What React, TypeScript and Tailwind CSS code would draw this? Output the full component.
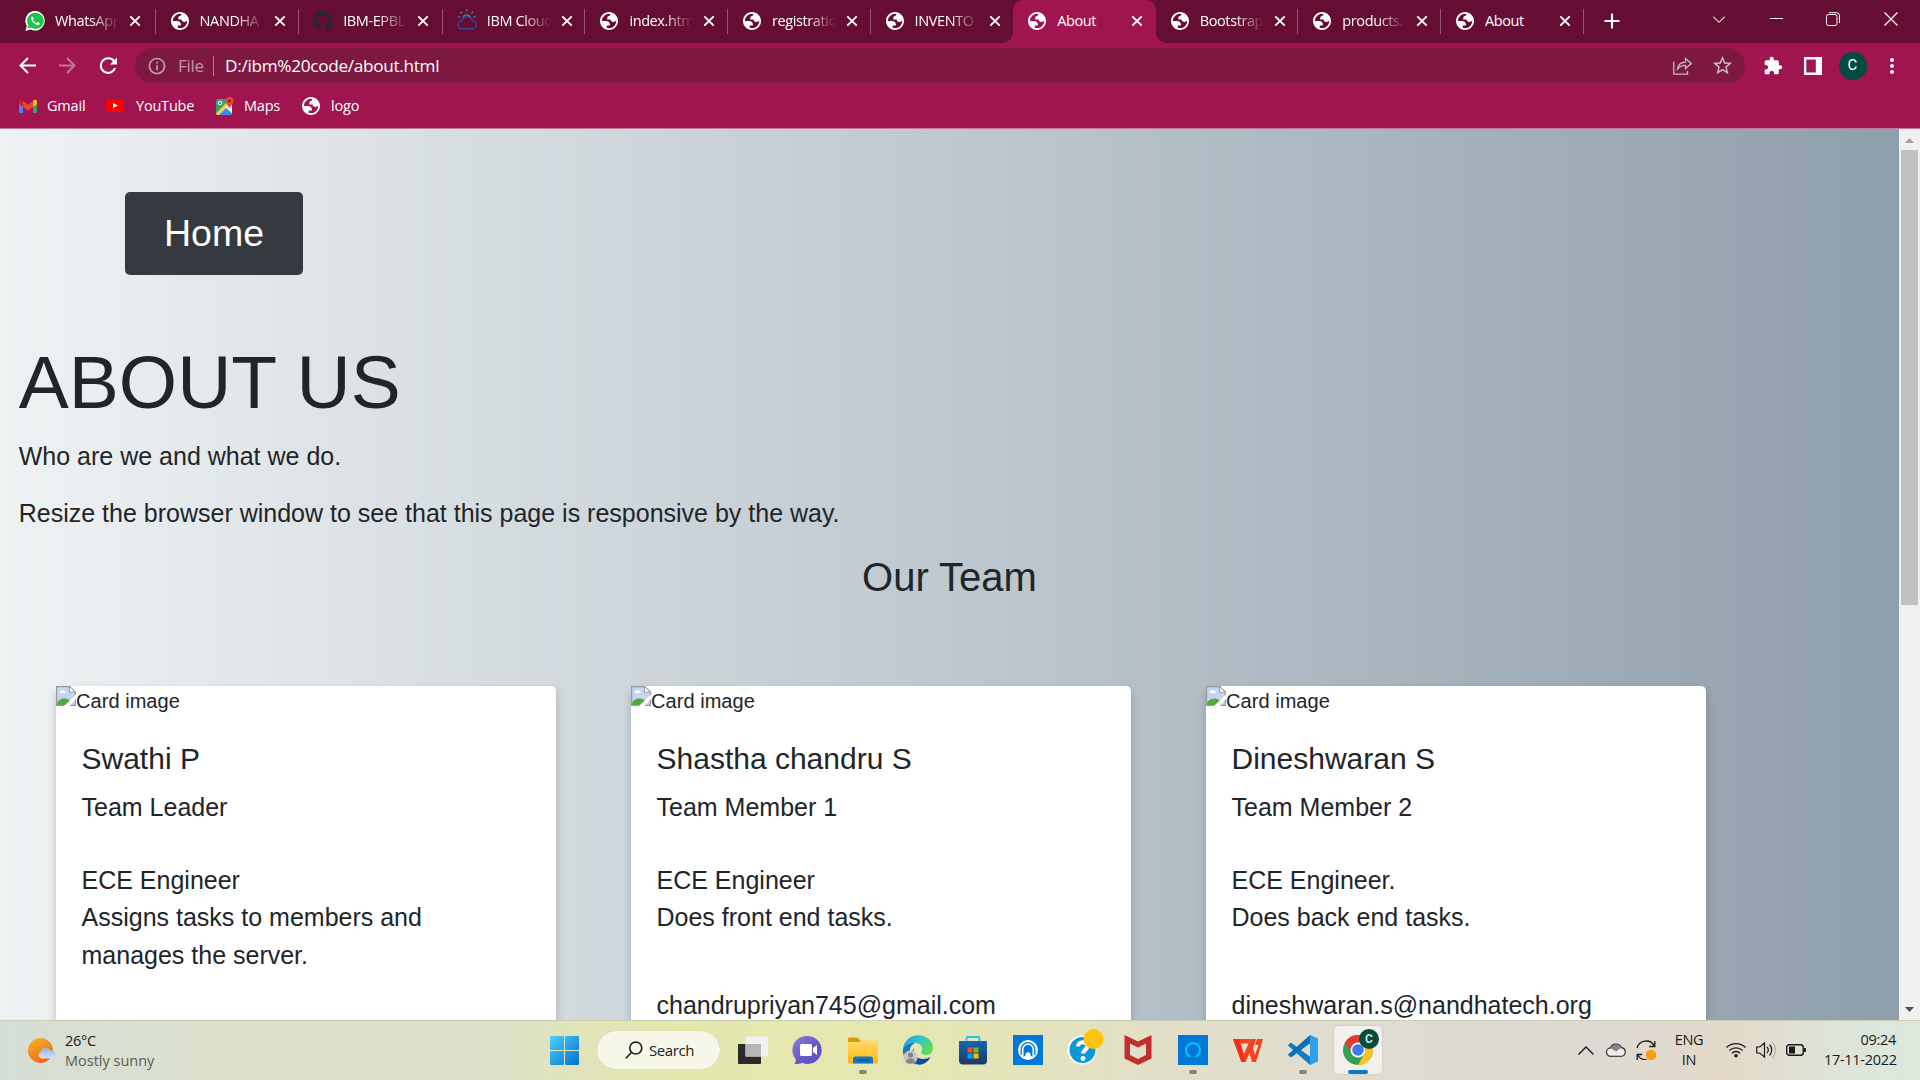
import React from "react";
import { VscChevronDown } from "react-icons/vsc";
import { MdExtension, MdOutlineInfo, MdStarOutline, MdMoreVert } from "react-icons/md";
import { FaGithub } from "react-icons/fa";

const ui = "font-['Open_Sans','Noto_Sans',sans-serif]";

function Globe() {
  return (
    <svg viewBox="2 2 20 20" className="size-[18px] shrink-0">
      <path
        fill="#fff"
        fillRule="evenodd"
        d="M12 2C6.480 2 2 6.480 2 12s4.480 10 10 10 10-4.480 10-10S17.520 2 12 2zM4 12h4.400c3.407.022 4.922 1.730 4.543 5.127H9.488v2.470a8.004 8.004 0 0 0 10.498-8.083C19.327 12.504 18.332 13 17 13c-2.137 0-3.206-.916-3.206-2.750h-3.748c-.274-2.728.683-4.092 2.870-4.092 0-.975.327-1.597.811-1.970A8.004 8.004 0 0 0 4 12z"
      />
    </svg>
  );
}

function WhatsApp() {
  return (
    <svg viewBox="0 0 20 20" className="size-5 shrink-0">
      <path d="M10.2 0A9.7 9.7 0 0 0 1.8 14.8L.3 20l5.3-1.4A9.8 9.8 0 1 0 10.2 0z" fill="#fff" />
      <path d="M10.2 1.7a8 8 0 0 0-6.8 12.2l-.9 3.4 3.5-.9A8.1 8.1 0 1 0 10.2 1.7z" fill="#1fc24a" />
      <path
        d="M7.2 5.3c-1 .5-1.5 1.7-1 3 1 2.700 3.200 4.900 5.700 5.700 1.400.4 2.700-.4 2.900-1.800l-2.200-1.200-1.100 1.200c-1.700-.7-2.900-1.900-3.500-3.400l.9-1.100z"
        fill="#fff"
      />
    </svg>
  );
}

function CloudSun() {
  return (
    <svg viewBox="0 0 20 22" className="-mt-1 h-[22px] w-5 shrink-0" fill="none" strokeWidth="1.5">
      <path d="M5 20.800h10a4 4 0 0 0 .5-8 5.500 5.500 0 0 0-10.500 0 4 4 0 0 0 0 8z" stroke="#31479b" />
      <path d="M6 9.500a4 4 0 0 1 7.500 0M9.700 1v2.500M3.500 3.500l1.500 2M16 3.500l-1.500 2M1 8.500l2.200.6M18.500 8.500l-2.200.6" stroke="#3d7d92" />
    </svg>
  );
}

function TabX() {
  return (
    <svg viewBox="0 0 12 12" className="size-3 shrink-0">
      <path d="M1.300 1.300l9.400 9.400M10.700 1.300l-9.400 9.400" stroke="#fff" strokeWidth="1.900" />
    </svg>
  );
}

type Tab = { title: string; icon: "wa" | "globe" | "gh" | "cloud"; active?: boolean; sep?: boolean };
const tabs: Tab[] = [
  { title: "WhatsApp", icon: "wa", sep: true },
  { title: "NANDHA", icon: "globe", sep: true },
  { title: "IBM-EPBL", icon: "gh", sep: true },
  { title: "IBM Cloud", icon: "cloud", sep: true },
  { title: "index.htm", icon: "globe", sep: true },
  { title: "registratio", icon: "globe", sep: true },
  { title: "INVENTO", icon: "globe" },
  { title: "About", icon: "globe", active: true },
  { title: "Bootstrap", icon: "globe", sep: true },
  { title: "products.", icon: "globe", sep: true },
  { title: "About", icon: "globe", sep: true },
];

function TabStrip() {
  return (
    <div className="flex h-[43px] bg-[#650d32] pl-3">
      {tabs.map((t, i) => (
        <div
          key={i}
          className={
            t.active
              ? "relative h-[43px] w-[142.600px] shrink-0 rounded-t-[10px] bg-[#a0144f]"
              : i < 3
                ? "relative h-[43px] w-[143.600px] shrink-0"
                : "relative h-[43px] w-[142.600px] shrink-0"
          }
        >
          {t.active && (
            <>
              <span className="absolute bottom-0 -left-2.5 size-2.5 bg-[radial-gradient(circle_at_0_0,#650d32_9.500px,#a0144f_10px)]" />
              <span className="absolute -right-2.5 bottom-0 size-2.5 bg-[radial-gradient(circle_at_100%_0,#650d32_9.500px,#a0144f_10px)]" />
            </>
          )}
          <div className={i === 0 ? "flex h-[42px] items-center pl-[13px]" : "flex h-[42px] items-center pl-3.5"}>
            <div className="flex w-5 justify-center">
              {t.icon === "wa" && <WhatsApp />}
              {t.icon === "globe" && <Globe />}
              {t.icon === "gh" && <FaGithub className="size-5 shrink-0 text-[#24292e]" />}
              {t.icon === "cloud" && <CloudSun />}
            </div>
            <span
              className={
                "ml-[10px] w-[64px] text-[14.500px] tracking-[-0.400px] whitespace-nowrap text-white " +
                (t.title === "About" ? "" : "[mask-image:linear-gradient(to_right,#000_55%,transparent)]")
              }
            >
              {t.title}
            </span>
            <span className="ml-[10px]">
              <TabX />
            </span>
          </div>
          {t.sep && <span className="absolute top-[9px] right-0 h-[25px] w-px bg-[#96587a]" />}
        </div>
      ))}
      <div className="flex h-[42px] items-center pl-[20px]">
        <svg viewBox="0 0 16 16" className="size-4">
          <path d="M8 .5v15M.5 8h15" stroke="#fff" strokeWidth="2.200" />
        </svg>
      </div>
      <div className="ml-auto flex h-[37px] items-center pr-[22px] text-white">
        <VscChevronDown className="mr-[41px] size-[20px] opacity-80" />
        <svg viewBox="0 0 13 13" className="mr-[43px] size-[13px]">
          <path d="M0 6.500h13" stroke="#fff" />
        </svg>
        <svg viewBox="0 0 14 14" className="mr-[44px] size-[14px]" fill="none" stroke="#fff">
          <rect x=".5" y="2.500" width="10.500" height="11" rx="2" />
          <path d="M3 .700h7.500a3 3 0 0 1 3 3v7.300" />
        </svg>
        <svg viewBox="0 0 14 14" className="size-[14px]">
          <path d="M.5.5l13 13M13.500.5l-13 13" stroke="#fff" strokeWidth="1.200" />
        </svg>
      </div>
    </div>
  );
}

function Toolbar() {
  return (
    <div className="flex h-[45px] items-center bg-[#a0144f] pl-[19px]">
      <svg viewBox="0 0 17 17" className="size-[17px]" fill="none" stroke="#fff" strokeWidth="2">
        <path d="M17 8.500H1.500M9 1L1.500 8.500 9 16" />
      </svg>
      <svg viewBox="0 0 17 17" className="ml-[23px] size-[17px]" fill="none" stroke="#c9749a" strokeWidth="2">
        <path d="M0 8.500h15.500M8 1l7.500 7.500L8 16" />
      </svg>
      <svg viewBox="0 0 18 18" className="ml-[23px] size-[18px]" fill="none">
        <path d="M15.500 5A7.300 7.300 0 1 0 16 11" stroke="#fff" strokeWidth="2" />
        <path d="M18 .5v7h-7z" fill="#fff" />
      </svg>
      <div className="ml-[18px] flex h-[35px] w-[1610px] items-center rounded-full bg-[#7d1940] pr-[11.500px] pl-3">
        <MdOutlineInfo className="size-5 text-[#c1a0ae]" />
        <span className={ui + " ml-[11px] w-[27px] text-[17px] tracking-[-0.300px] text-[#c194a6]"}>File</span>
        <span className="ml-[8px] h-5 w-px bg-[#b27f94]" />
        <span className={ui + " ml-[11px] text-[17.200px] tracking-[-0.300px] text-white"}>D:/ibm%20code/about.html</span>
        <svg viewBox="0 0 19 18" className="ml-auto h-[18px] w-[19px]" fill="none" stroke="#c6bcc1" strokeWidth="1.300">
          <path d="M.8 4.500v12.600h13.700v-3M4.500 12c.5-4.500 3.500-6.700 8-6.900V1.500l5.700 5-5.700 5V8.300c-3.500 0-6 1-8 3.700z" />
        </svg>
        <MdStarOutline className="ml-[19px] size-[23px] text-[#c6bcc1]" />
      </div>
      <MdExtension className="ml-[17.500px] size-5 text-white" />
      <svg viewBox="0 0 18 18" className="ml-[21px] size-[18px]">
        <path d="M0 0h18v18H0zM2.300 2.500v13h9.500v-13z" fill="#fff" fillRule="evenodd" />
      </svg>
      <span className="ml-[17px] flex size-7 items-center justify-center rounded-full bg-[#024b3e] font-[Roboto,sans-serif] text-[15px] text-white">C</span>
      <MdMoreVert className="ml-[13.500px] size-6 text-white" />
    </div>
  );
}

function Bookmarks() {
  const label = ui + " text-[14.500px] tracking-[-0.200px] text-white";
  return (
    <div className="flex h-[41px] items-center border-b border-[#c27a99] bg-[#a0144f] pb-[5px] pl-[19px]">
      <svg viewBox="0 0 18 14" className="mr-[10px] h-[14px] w-[18px]">
        <path d="M0 2v11a1 1 0 0 0 1 1h3V5z" fill="#4285f4" />
        <path d="M14 14h3a1 1 0 0 0 1-1V2l-4 3z" fill="#34a853" />
        <path d="M4 8V2l5 3.800L14 2v6l-5 3.800z" fill="#ea4335" />
        <path d="M0 2.500C0 .5 2 0 4 1.500V8L0 5z" fill="#c5221f" />
        <path d="M18 2.500C18 .5 16 0 14 1.500V8l4-3z" fill="#fbbc04" />
      </svg>
      <span className={label + " w-[38px]"}>Gmail</span>
      <svg viewBox="0 0 18 13" className="mr-3 ml-[21px] h-[13px] w-[18px]">
        <rect width="18" height="13" rx="3" fill="#f00" />
        <path d="M7 4l5 2.500L7 9z" fill="#fff" />
      </svg>
      <span className={label + " w-[58px]"}>YouTube</span>
      <svg viewBox="0 0 18 18" className="mr-[10px] ml-[22px] size-[18px]">
        <rect y="2" width="16" height="16" rx="1.500" fill="#34a06a" />
        <path d="M1 18L8.500 9.500 16 18z" fill="#4285f4" />
        <path d="M0 16.500L12 4l2.500 2.500L3 18H1z" fill="#fbd04a" />
        <path d="M9 10l7-5v11.500z" fill="#e8eaed" />
        <path d="M13.500 0a4 4 0 0 0-4 4c0 3 3.300 4 4 8 .7-4 4-5 4-8a4 4 0 0 0-4-4z" fill="#ea4335" />
        <circle cx="13.500" cy="4" r="1.500" fill="#961e17" />
        <circle cx="4" cy="6" r="1.800" fill="none" stroke="#fff" />
      </svg>
      <span className={label + " w-[37px]"}>Maps</span>
      <span className="mr-[11px] ml-[21px]">
        <Globe />
      </span>
      <span className={label}>logo</span>
    </div>
  );
}

function BrokenImage() {
  return (
    <svg viewBox="0 0 20 20" className="size-5">
      <path d="M.6.6h13l5.800 5.400v13.400H.6z" fill="#c3d5f3" stroke="#9a9a9a" strokeWidth="1.200" />
      <path d="M13.500.6v5.600h6z" fill="#fff" stroke="#9a9a9a" />
      <path d="M3.500 7c0-2 1-2 1.500-2 .6-1.500 3-1.500 3.500 0 1.500 0 1.800 2 .5 2z" fill="#fff" />
      <path d="M1.200 19v-2.500C4 12.500 8.500 11 14 14.500V19z" fill="#54a83c" />
      <path d="M8 20L20 8.500V13l-6.500 7z" fill="#fff" />
    </svg>
  );
}

type Member = { name: string; role: string; lines: string[]; email?: string };
const team: Member[] = [
  { name: "Swathi P", role: "Team Leader", lines: ["ECE Engineer", "Assigns tasks to members and", "manages the server."] },
  { name: "Shastha chandru S", role: "Team Member 1", lines: ["ECE Engineer", "Does front end tasks."], email: "chandrupriyan745@gmail.com" },
  { name: "Dineshwaran S", role: "Team Member 2", lines: ["ECE Engineer.", "Does back end tasks."], email: "dineshwaran.s@nandhatech.org" },
];

function Page() {
  return (
    <div className="flex h-[891px] overflow-hidden">
      <main className="h-[891px] w-[1899px] overflow-hidden bg-[linear-gradient(to_right,#eef2f3,#8e9eab)] font-['Liberation_Sans',Arial,sans-serif] text-[25px] leading-[37.500px] text-[#212529]">
        <div className="pt-[63px] pl-[125px]">
          <div className="flex h-[83px] w-[178px] items-center justify-center rounded-[5px] bg-[#343a40] text-[37.500px] text-white">Home</div>
        </div>
        <h1 className="mt-[62px] pl-[18.750px] text-[75px] leading-[90px]">ABOUT US</h1>
        <p className="mt-[11px] pl-[18.750px]">Who are we and what we do.</p>
        <p className="mt-[19px] pl-[18.750px]">Resize the browser window to see that this page is responsive by the way.</p>
        <h2 className="mt-[21px] text-center text-[40px] leading-[48px]">Our Team</h2>
        <div className="mt-[85px] flex gap-[75px] pl-[56px]">
          {team.map((m) => (
            <div key={m.name} className="h-[420px] w-[500px] shrink-0 rounded-[5px] bg-white shadow-[0_5px_10px_rgba(0,0,0,0.2)]">
              <div className="flex h-[30px]">
                <BrokenImage />
                <span className="text-[20px] leading-[30px] tracking-[0.050px]">Card image</span>
              </div>
              <div className="px-[25.500px] pt-[25px]">
                <h3 className="text-[30px] leading-9">{m.name}</h3>
                <p className="mt-3">{m.role}</p>
                <div className="mt-[35px]">
                  {m.lines.map((l) => (
                    <p key={l}>{l}</p>
                  ))}
                </div>
                {m.email && <p className="mt-[50px]">{m.email}</p>}
              </div>
            </div>
          ))}
        </div>
      </main>
      <div className="flex h-full w-[21px] flex-col items-center bg-[#f0f0f0]">
        <svg viewBox="0 0 9 5" className="mt-[9px] h-[5px] w-[9px]">
          <path d="M4.500 0L9 5H0z" fill="#a3a3a3" />
        </svg>
        <div className="mt-[7px] h-[455px] w-[17px] bg-[#c1c1c1]" />
        <svg viewBox="0 0 9 5" className="mt-auto mb-[8px] h-[5px] w-[9px]">
          <path d="M4.500 5L9 0H0z" fill="#505050" />
        </svg>
      </div>
    </div>
  );
}

const Box = ({ children }: { children: React.ReactNode }) => (
  <svg viewBox="0 0 30 30" className="size-[30px] overflow-visible">
    {children}
  </svg>
);

const apps: { id: string; dot?: boolean; art: React.ReactNode }[] = [
  {
    id: "taskview",
    art: (
      <>
        <rect x="0" y="9" width="23" height="20" rx="1" fill="#2c2a29" />
        <rect x="7.500" y="1.500" width="22.500" height="20" rx="1" fill="#f1f1f1" />
        <path d="M7.500 9H23v12.500H7.500z" fill="#b6b6b6" />
      </>
    ),
  },
  {
    id: "chat",
    art: (
      <>
        <path d="M15 1a14 14 0 1 1-6 26.800c-2.500 1.400-5 1.400-7.500 1.200 1-1.500 1.500-3 1.200-5A14 14 0 0 1 15 1z" fill="url(#chat)" />
        <rect x="7" y="9" width="12" height="12" rx="1.500" fill="#fff" />
        <path d="M20 13l4-3v10l-4-3z" fill="#fff" />
      </>
    ),
  },
  {
    id: "explorer",
    dot: true,
    art: (
      <>
        <path d="M0 8V4a1.500 1.500 0 0 1 1.500-1.500h8L13 6H30v2z" fill="#dd9a08" />
        <path d="M0 7h11.500l2-1.500H29a1 1 0 0 1 1 1V27.500a1 1 0 0 1-1 1H1a1 1 0 0 1-1-1z" fill="url(#folder)" />
        <path d="M5 28.500V24a2.500 2.500 0 0 1 2.500-2.500h15A2.500 2.500 0 0 1 25 24v4.500z" fill="#1078c8" />
        <path d="M9 25.200h12" stroke="#0a4a86" strokeWidth="1.200" />
      </>
    ),
  },
  {
    id: "edge",
    art: (
      <>
        <path d="M0 14C1 5.500 7.500.3 15.300.3 24.500.3 30 7 30 12.500c0 4.500-3 7.500-7 7.500-3 0-5-1-5-2.500 0-1 1.300-1.700 1.300-4 0-3-3-5.500-7-5.500C6.500 8 2 11 0 14z" fill="url(#edgeTop)" />
        <path d="M0 14C2.500 9.500 7 7.800 12 8c-5 2-6.500 8-4 13 2.500 4.800 8 7 13.500 6.500C13 32 2 28 .3 19A14 14 0 0 1 0 14z" fill="#1478c8" />
        <path d="M11 13c-2 5.500 2.500 11 9 11 3 0 5-.8 7.500-2-2 4.500-6 7.200-11 7.700C9 29 6 19 11 13z" fill="#0d4c9c" />
        <circle cx="7.500" cy="22.500" r="7" fill="#c6c6c6" />
        <circle cx="7.500" cy="20" r="2.600" fill="#858585" />
        <path d="M3 27c0-5 9-5 9 0-2 2.300-7 2.300-9 0z" fill="#858585" />
      </>
    ),
  },
  {
    id: "store",
    art: (
      <>
        <path d="M8.500 7V3.500A1.500 1.500 0 0 1 10 2h10a1.500 1.500 0 0 1 1.500 1.500V7" stroke="#25c0f5" strokeWidth="1.800" fill="none" />
        <path d="M1 6h28v19.500a4 4 0 0 1-4 4H5a4 4 0 0 1-4-4z" fill="url(#store)" />
        <path d="M9.500 12.500h5v5h-5z" fill="#f25022" />
        <path d="M15.500 12.500h5v5h-5z" fill="#7fba00" />
        <path d="M9.500 18.500h5v5h-5z" fill="#00a4ef" />
        <path d="M15.500 18.500h5v5h-5z" fill="#ffb900" />
      </>
    ),
  },
  {
    id: "arch",
    art: (
      <>
        <path d="M0 0h30v30H0z" fill="#0078d7" />
        <circle cx="15" cy="15" r="10" fill="#fff" />
        <path d="M8.200 20V14.500a6.800 6.800 0 0 1 13.600 0V20" fill="none" stroke="#0078d7" strokeWidth="1.300" />
        <path d="M10.500 22v-7.500a4.500 4.500 0 0 1 9 0V22l-2-1.500v-2L15 17l-2.500 1.500v2z" fill="#0078d7" />
      </>
    ),
  },
  {
    id: "help",
    art: (
      <>
        <circle cx="14" cy="15" r="14.500" fill="#fff" />
        <circle cx="14.500" cy="15" r="13" fill="#0c98d8" />
        <path d="M10 11.500C10 5.500 19.500 6 19.500 11c0 3.500-4.500 4-4.500 7.500" stroke="#fff" strokeWidth="4" fill="none" />
        <circle cx="15" cy="23.500" r="2.400" fill="#fff" />
        <circle cx="25.500" cy="4" r="10" fill="#ffc20e" />
      </>
    ),
  },
  {
    id: "shield",
    art: <path d="M1.500 0L15 6.500 28.500 0v23.500L15 30 1.500 23.500zM7 8.500v11.500l8 4 8-4V8.500l-8 4z" fill="#bf2f2d" fillRule="evenodd" />,
  },
  {
    id: "ring",
    dot: true,
    art: (
      <>
        <path d="M0 0h30v30H0z" fill="#0078d7" />
        <path d="M12.500 21.800a7 7 0 1 1 5 0" stroke="#00c8ff" strokeWidth="1.900" fill="none" />
      </>
    ),
  },
  {
    id: "wps",
    art: (
      <>
        <path d="M0 4h17l-1.500 4.500H7.500L11 19l6.500-15H23l-3 9 2 7 3.500-10h-3.500L24 4h6l-7 23h-4l-2.500-9-4 9H8.500z" fill="#f4411f" />
        <path d="M0 4h6l6.500 23h-4z" fill="#fa2b18" />
      </>
    ),
  },
  {
    id: "code",
    dot: true,
    art: (
      <>
        <path d="M.5 11a1 1 0 0 1 0-1.500L2 8.200a1.500 1.500 0 0 1 2 0L23 22.500v7L21.500 29.500z" fill="#0f7dc4" />
        <path d="M.5 19a1 1 0 0 0 0 1.500L2 21.800a1.500 1.500 0 0 0 2 0L23 7.500v-7L21.500.5z" fill="#0a6fb8" />
        <path d="M22 0l7 3a1.500 1.500 0 0 1 1 1.500v21a1.500 1.500 0 0 1-1 1.500l-7 3z" fill="#2aa0ee" />
      </>
    ),
  },
];

function Chrome() {
  return (
    <div className="relative flex size-[48px] items-center justify-center rounded-[5px] bg-[#f1f0ec] shadow-[0_0_1px_1px_rgba(0,0,0,0.05)]">
      <Box>
        <circle cx="15" cy="15" r="15" fill="#34a053" />
        <path d="M2 7.500A15 15 0 0 1 28 7.500H15a7.500 7.500 0 0 0-6.500 11.200z" fill="#e33b2e" />
        <path d="M28 7.500A15 15 0 0 1 15 30l6.500-11.200A7.500 7.500 0 0 0 15 7.500z" fill="#fcc31e" />
        <circle cx="15" cy="15" r="7.500" fill="#fff" />
        <circle cx="15" cy="15" r="5.800" fill="#3a7cec" />
      </Box>
      <span className="absolute top-[3px] right-[3px] flex size-5 items-center justify-center rounded-full bg-[#074d3f] font-[Roboto,sans-serif] text-[12px] font-bold text-[#cfe0da]">C</span>
      <span className="absolute bottom-0 left-[14px] h-1 w-5 rounded-full bg-[#0a78d4]" />
    </div>
  );
}

function Taskbar() {
  return (
    <div
      className={
        ui +
        " flex h-[60px] border-t border-[#c9cdb2] bg-[linear-gradient(to_right,#d6dfd6_0%,#dbe0cd_10%,#dce0c8_25%,#e4e8ac_35%,#e5e7b2_48%,#e2dfc8_60%,#dedbd5_75%,#dedad3_84%,#e4d9c9_90%,#dde5da_96%,#dce8dc_100%)] text-[14.500px] text-[#1a1a1a]"
      }
    >
      <svg className="absolute size-0">
        <defs>
          <linearGradient id="chat" x1="0" y1="0" x2="1" y2="1"><stop offset="0" stopColor="#8c86d8" /><stop offset=".5" stopColor="#6a58c8" /><stop offset="1" stopColor="#5c4fc0" /></linearGradient>
          <linearGradient id="folder" x1="0" y1="0" x2="0" y2="1"><stop offset="0" stopColor="#ffd968" /><stop offset="1" stopColor="#fdb813" /></linearGradient>
          <linearGradient id="edgeTop" x1="0" y1="0" x2="1" y2=".5"><stop offset="0" stopColor="#2196d8" /><stop offset=".5" stopColor="#2fc2d0" /><stop offset="1" stopColor="#5ddc5a" /></linearGradient>
          <linearGradient id="store" x1="0" y1="0" x2="0" y2="1"><stop offset="0" stopColor="#0f68b4" /><stop offset="1" stopColor="#213863" /></linearGradient>
          <linearGradient id="win" gradientUnits="userSpaceOnUse" x1="0" y1="0" x2="29" y2="29"><stop offset="0" stopColor="#4cd0fc" /><stop offset="1" stopColor="#0072d0" /></linearGradient>
          <linearGradient id="sun" x1="0" y1="0" x2=".5" y2="1"><stop offset="0" stopColor="#f3ba2d" /><stop offset="1" stopColor="#ee6a15" /></linearGradient>
          <linearGradient id="puff" x1="0" y1="0" x2="0" y2="1"><stop offset="0" stopColor="#8fb2f0" /><stop offset="1" stopColor="#d5e2fa" /></linearGradient>
        </defs>
      </svg>
      <div className="flex w-[550px] items-center pl-7">
        <svg viewBox="0 0 28 26" className="size-7">
          <circle cx="12.500" cy="12.500" r="12.500" fill="url(#sun)" />
          <path d="M13.500 20.500a3.500 3.500 0 0 1-.5-6.800 5 5 0 0 1 9.500-1 4 4 0 0 1 2 7.800z" fill="url(#puff)" />
        </svg>
        <div className="ml-[9px] leading-[20px]">
          <div className="tracking-[-0.300px]">26°C</div>
          <div className="text-[#5a5c52]">Mostly sunny</div>
        </div>
      </div>
      <div className="-mt-px flex items-center">
        <svg viewBox="0 0 29 29" className="size-[29px]" fill="url(#win)">
          <rect width="14" height="14" rx="1" />
          <rect x="15" width="14" height="14" rx="1" />
          <rect y="15" width="14" height="14" rx="1" />
          <rect x="15" y="15" width="14" height="14" rx="1" />
        </svg>
        <div className="ml-[18px] flex h-[38px] w-[123px] items-center rounded-full bg-[#f6f7e9] pl-[28px] shadow-[0_0_1px_rgba(0,0,0,0.2)]">
          <svg viewBox="0 0 18 18" className="size-[18px]" fill="none" stroke="#1a1a1a" strokeWidth="1.600">
            <circle cx="10.800" cy="7" r="6" />
            <path d="M6.500 11.500L.8 17.200" />
          </svg>
          <span className="ml-[6px] text-[15px] tracking-[-0.400px]">Search</span>
        </div>
        <div className="ml-[18px] flex gap-[25px]">
          {apps.map((a) => (
            <div key={a.id} className="relative">
              <Box>{a.art}</Box>
              {a.dot && <span className="absolute -bottom-[9px] left-[11px] h-1 w-2 rounded-full bg-[#85857a]" />}
            </div>
          ))}
        </div>
        <div className="ml-4">
          <Chrome />
        </div>
      </div>
      <div className="-mt-px ml-auto flex items-center pr-[24px]">
        <svg viewBox="0 0 16 9" className="h-[9px] w-4" fill="none" stroke="#1a1a1a" strokeWidth="1.400">
          <path d="M.5 8.500L8 1l7.500 7.500" />
        </svg>
        <svg viewBox="0 0 20 14" className="ml-[12px] h-[14px] w-5" stroke="#222" strokeWidth="1.100">
          <path d="M5 13.300a4.200 4.200 0 0 1-.5-8.400 6 6 0 0 1 11-.3 4.400 4.400 0 0 1 0 8.700z" fill="#ededed" />
          <path d="M4.500 4.900a6 6 0 0 1 11-.3L10 8.500z" fill="#858585" stroke="none" />
        </svg>
        <svg viewBox="0 0 20 20" className="ml-[10px] size-5" fill="none" stroke="#1a1a1a" strokeWidth="1.300">
          <path d="M1 8A9.300 9.300 0 0 1 18.500 6.500M18.800 1v5.500h-5.500M1.200 20v-5.500h5M1.500 15a9.300 9.300 0 0 0 9 4.500" />
          <circle cx="15" cy="15" r="5.200" fill="#ff9a0a" stroke="none" />
        </svg>
        <div className="ml-[18px] w-[30px] text-center leading-[20px] tracking-[-0.300px]">
          <div>ENG</div>
          <div>IN</div>
        </div>
        <svg viewBox="0 0 20 16" className="ml-[22px] h-4 w-5" fill="none" stroke="#1a1a1a" strokeWidth="1.300">
          <path d="M.5 5.500a13.500 13.500 0 0 1 19 0M3.500 8.500a9.300 9.300 0 0 1 13 0M6 11.200a5.600 5.600 0 0 1 8 0" />
          <circle cx="10" cy="13.800" r="1.800" fill="#1a1a1a" stroke="none" />
        </svg>
        <svg viewBox="0 0 20 18" className="ml-[10px] h-[18px] w-5" fill="none" stroke="#1a1a1a" strokeWidth="1.200">
          <path d="M.7 6v6h3L8.500 16V2L3.700 6zM11 6a4.500 4.500 0 0 1 0 6M13.500 3.500a8 8 0 0 1 0 11" />
          <path d="M16 1a11 11 0 0 1 0 16" stroke="#b5b0a8" />
        </svg>
        <svg viewBox="0 0 20 12" className="ml-[10px] h-3 w-5">
          <rect x=".7" y=".7" width="16.500" height="10.600" rx="2.500" fill="none" stroke="#1a1a1a" strokeWidth="1.400" />
          <rect x="3" y="2.500" width="6" height="7" fill="#1a1a1a" />
          <path d="M18 4h1.200a.8.8 0 0 1 .8.8v2.400a.8.8 0 0 1-.8.800H18z" fill="#1a1a1a" />
        </svg>
        <div className="ml-[18px] w-[72px] text-right leading-[20px] tracking-[-0.300px] whitespace-nowrap">
          <div>09:24</div>
          <div>17-11-2022</div>
        </div>
      </div>
    </div>
  );
}

export default function App() {
  return (
    <div className="h-[1080px] w-[1920px] overflow-hidden">
      <div className={ui}>
        <TabStrip />
        <Toolbar />
        <Bookmarks />
      </div>
      <Page />
      <Taskbar />
    </div>
  );
}
